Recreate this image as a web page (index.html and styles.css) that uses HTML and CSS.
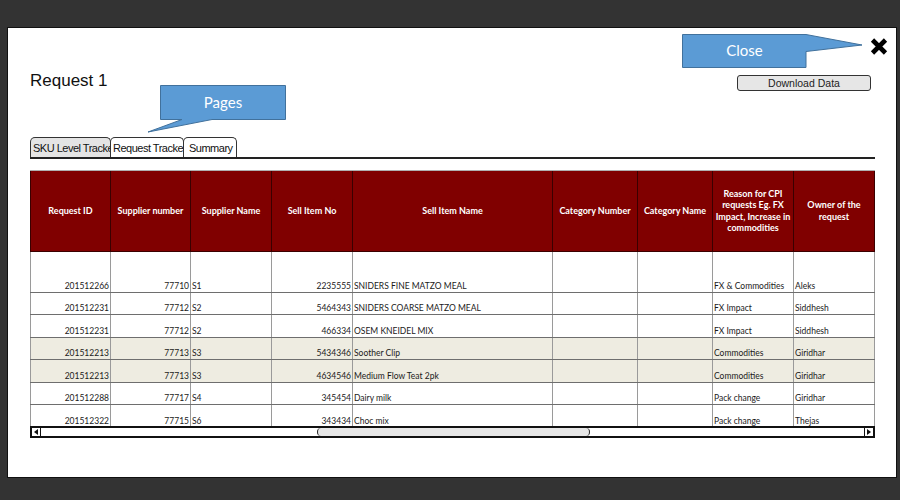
FILE: index.html
```html
<!DOCTYPE html>
<html>
<head>
<meta charset="utf-8">
<link rel="stylesheet" href="styles.css">
</head>
<body>
<div class="modal">
  <div class="callout callout-pages">
    <svg width="140" height="50" viewBox="0 0 140 50"><path d="M13.5 1.5 H138.5 V35.5 H65 L1 48 L35 35.5 H13.5 Z" fill="#5b9bd5" stroke="#41719c" stroke-width="1"/></svg>
    <span class="callout-text">Pages</span>
  </div>
  <div class="callout callout-close">
    <svg width="184" height="37" viewBox="0 0 184 37"><path d="M1.5 1.5 H125 L181 12 L125 18.5 V34.5 H1.5 Z" fill="#5b9bd5" stroke="#41719c" stroke-width="1"/></svg>
    <span class="callout-text">Close</span>
  </div>
  <button class="close-x" aria-label="Close">
    <svg width="18" height="17" viewBox="0 0 18 17"><path d="M2.5 2 L15.5 15 M15.5 2 L2.5 15" stroke="#000" stroke-width="4.6"/></svg>
  </button>

  <div class="head">
    <h1 class="title">Request 1</h1>
    <button class="download">Download Data</button>
  </div>

  <div class="tabs">
    <div class="tab tab-sku">SKU Level Tracker</div>
    <div class="tab tab-req">Request Tracker</div>
    <div class="tab tab-sum">Summary</div>
  </div>

  <div class="grid-wrap">
    <table class="grid">
      <colgroup>
        <col class="c80"><col class="c80"><col class="c81"><col class="c81"><col class="c200"><col class="c85"><col class="c75"><col class="c81"><col class="c81">
      </colgroup>
      <thead>
        <tr>
          <th>Request ID</th>
          <th>Supplier number</th>
          <th>Supplier Name</th>
          <th>Sell Item No</th>
          <th>Sell Item Name</th>
          <th>Category Number</th>
          <th>Category Name</th>
          <th>Reason for CPI requests Eg. FX Impact, Increase in commodities</th>
          <th>Owner of the request</th>
        </tr>
      </thead>
      <tbody>
        <tr class="first">
          <td class="num">201512266</td><td class="num">77710</td><td>S1</td><td class="num">2235555</td><td>SNIDERS FINE MATZO MEAL</td><td></td><td></td><td>FX &amp; Commodities</td><td>Aleks</td>
        </tr>
        <tr class="r22">
          <td class="num">201512231</td><td class="num">77712</td><td>S2</td><td class="num">5464343</td><td>SNIDERS COARSE MATZO MEAL</td><td></td><td></td><td>FX Impact</td><td>Siddhesh</td>
        </tr>
        <tr class="r23">
          <td class="num">201512231</td><td class="num">77712</td><td>S2</td><td class="num">466334</td><td>OSEM KNEIDEL MIX</td><td></td><td></td><td>FX Impact</td><td>Siddhesh</td>
        </tr>
        <tr class="r22 shade">
          <td class="num">201512213</td><td class="num">77713</td><td>S3</td><td class="num">5434346</td><td>Soother Clip</td><td></td><td></td><td>Commodities</td><td>Giridhar</td>
        </tr>
        <tr class="r23 shade">
          <td class="num">201512213</td><td class="num">77713</td><td>S3</td><td class="num">4634546</td><td>Medium Flow Teat 2pk</td><td></td><td></td><td>Commodities</td><td>Giridhar</td>
        </tr>
        <tr class="r22">
          <td class="num">201512288</td><td class="num">77717</td><td>S4</td><td class="num">345454</td><td>Dairy milk</td><td></td><td></td><td>Pack change</td><td>Giridhar</td>
        </tr>
        <tr class="r23">
          <td class="num">201512322</td><td class="num">77715</td><td>S6</td><td class="num">343434</td><td>Choc mix</td><td></td><td></td><td>Pack change</td><td>Thejas</td>
        </tr>
      </tbody>
    </table>
  </div>

  <div class="scrollbar">
    <div class="arrow arrow-left"><span class="tri tri-left"></span></div>
    <div class="track"><div class="thumb" style="margin-left:276px;width:273px"></div></div>
    <div class="arrow arrow-right"><span class="tri tri-right"></span></div>
  </div>
</div>
</body>
</html>
```

FILE: styles.css
```css
* { box-sizing: border-box; }

html, body {
  margin: 0;
  padding: 0;
  background: #333333;
  width: 900px;
  height: 500px;
  overflow: hidden;
}

.modal {
  position: relative;
  margin: 27px 0 0 7px;
  width: 890px;
  height: 451px;
  background: #ffffff;
  border: 1px solid #111111;
  padding: 0 21px 0 22px;
  font-family: "Liberation Sans", Arial, sans-serif;
  color: #111;
}

/* callouts (overlay annotations) */
.callout {
  position: absolute;
}
.callout svg { display: block; }
.callout-text {
  position: absolute;
  color: #ffffff;
  font-family: "Lato", "Open Sans", sans-serif;
  font-size: 15px;
  line-height: 18px;
  text-align: center;
}
.callout-pages {
  left: 139px;
  top: 56px;
  width: 140px;
  height: 50px;
}
.callout-pages .callout-text {
  left: 14px;
  top: 9px;
  width: 124px;
}
.callout-close {
  left: 673px;
  top: 5px;
  width: 184px;
  height: 37px;
}
.callout-close .callout-text {
  left: 2px;
  top: 8px;
  width: 123px;
}

.close-x {
  position: absolute;
  left: 862px;
  top: 10px;
  width: 18px;
  height: 17px;
  padding: 0;
  border: none;
  background: transparent;
}
.close-x svg { display: block; }

/* header */
.head {
  display: flex;
  justify-content: space-between;
  align-items: flex-start;
  padding-top: 43px;
  height: 109px;
}
.title {
  margin: 0;
  font-size: 17px;
  line-height: 20px;
  font-weight: normal;
  color: #111;
}
.download {
  margin: 4px 4px 0 0;
  width: 134px;
  height: 16px;
  padding: 0;
  border: 1.5px solid #333;
  border-radius: 3px;
  background: #e6e6e6;
  font-family: "Liberation Sans", Arial, sans-serif;
  font-size: 10.5px;
  line-height: 13px;
  color: #222;
}

/* tabs */
.tabs {
  display: flex;
  height: 22px;
  border-bottom: 2px solid #222;
}
.tab {
  height: 20px;
  border: 1.5px solid #333;
  border-bottom: none;
  border-radius: 5px 5px 0 0;
  overflow: hidden;
  white-space: nowrap;
  font-family: "Liberation Sans", Arial, sans-serif;
  font-size: 11px;
  letter-spacing: -0.5px;
  line-height: 16px;
  padding: 2px 0 0 2px;
  color: #111;
  background: #fff;
}
.tab-sku { width: 81px; background: #e4e4e4; }
.tab-req { width: 74px; margin-left: -1px; }
.tab-sum { width: 54px; margin-left: -1px; padding-left: 5px; }

/* grid */
.grid-wrap {
  margin-top: 11px;
  height: 256px;
  overflow: hidden;
  border-top: 1px solid #b0b0b0;
}
.grid {
  border-collapse: collapse;
  table-layout: fixed;
  width: 845px;
  font-family: "Lato", "Open Sans", sans-serif;
}
.c80 { width: 80px; }
.c81 { width: 81px; }
.c85 { width: 85px; }
.c75 { width: 75px; }
.c200 { width: 200px; }

.grid th {
  background: #800000;
  color: #ffffff;
  font-size: 9px;
  font-weight: bold;
  line-height: 11.5px;
  height: 80px;
  border: 1px solid #3a0000;
  border-top: none;
  padding: 0 2px;
  text-align: center;
  vertical-align: middle;
}
.grid td {
  font-size: 8.5px;
  line-height: 11px;
  color: #1a1a1a;
  border-left: 1px solid #9a9a9a;
  border-right: 1px solid #9a9a9a;
  border-bottom: 1px solid #6e6e6e;
  padding: 0 1px 0 1px;
  vertical-align: bottom;
  white-space: nowrap;
  overflow: hidden;
}
.grid td.num { text-align: right; }
.grid tr.first td { height: 41px; }
.grid tr.r22 td { height: 22px; }
.grid tr.r23 td { height: 23px; }
.grid tr.shade td { background: #eeece1; }

/* scrollbar */
.scrollbar {
  display: flex;
  height: 12px;
  border: 2px solid #111;
  background: #fff;
}
.arrow {
  width: 9px;
  display: flex;
  align-items: center;
  justify-content: center;
  background: #fff;
}
.arrow-left { border-right: 1.5px solid #111; }
.arrow-right { border-left: 1.5px solid #111; }
.tri {
  width: 0;
  height: 0;
  border-top: 3px solid transparent;
  border-bottom: 3px solid transparent;
}
.tri-left { border-right: 4px solid #111; }
.tri-right { border-left: 4px solid #111; }
.track {
  flex: 1;
  display: flex;
  align-items: stretch;
}
.thumb {
  height: 100%;
  border: 1px solid #222;
  border-top: none;
  border-bottom: none;
  border-radius: 7px;
  background: #e6e6e6;
}
```
